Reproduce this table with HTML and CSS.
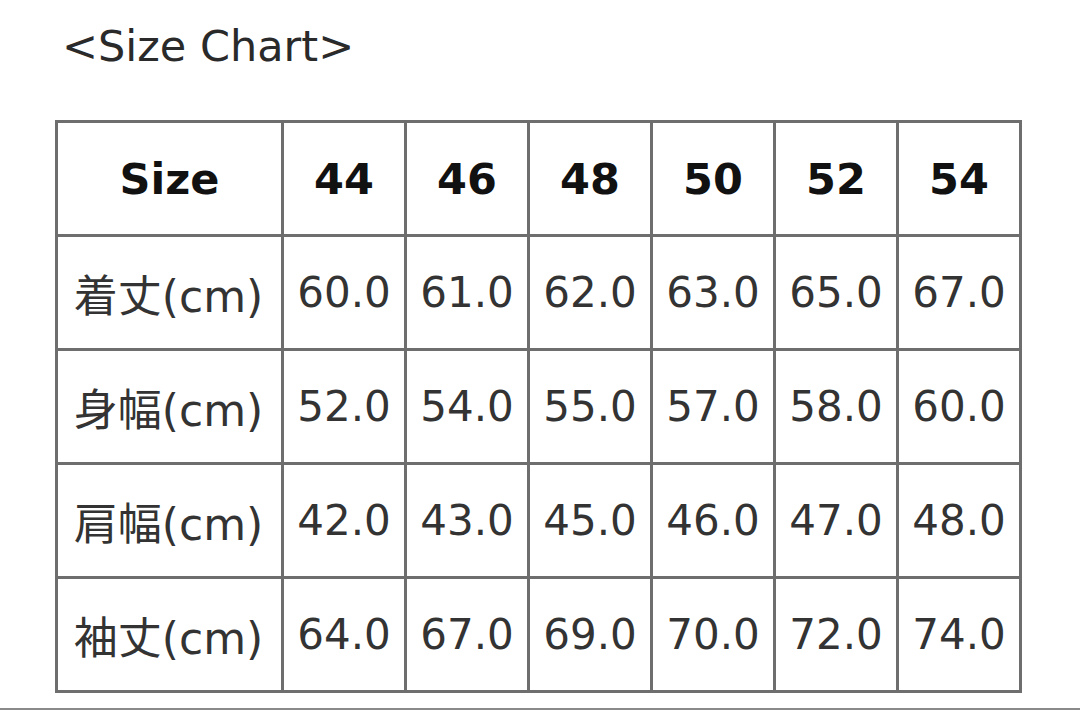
FILE: index.html
```html
<!DOCTYPE html>
<html>
<head>
<meta charset="utf-8">
<link rel="stylesheet" href="styles.css">
</head>
<body>
<div class="page">
  <div class="title">&lt;Size Chart&gt;</div>
  <table class="chart">
    <colgroup>
      <col class="c-label"><col class="c-val"><col class="c-val"><col class="c-val"><col class="c-val"><col class="c-val"><col class="c-val">
    </colgroup>
    <tr class="head">
      <th>Size</th><th>44</th><th>46</th><th>48</th><th>50</th><th>52</th><th>54</th>
    </tr>
    <tr><td class="label">着丈(cm)</td><td>60.0</td><td>61.0</td><td>62.0</td><td>63.0</td><td>65.0</td><td>67.0</td></tr>
    <tr><td class="label">身幅(cm)</td><td>52.0</td><td>54.0</td><td>55.0</td><td>57.0</td><td>58.0</td><td>60.0</td></tr>
    <tr><td class="label">肩幅(cm)</td><td>42.0</td><td>43.0</td><td>45.0</td><td>46.0</td><td>47.0</td><td>48.0</td></tr>
    <tr><td class="label">袖丈(cm)</td><td>64.0</td><td>67.0</td><td>69.0</td><td>70.0</td><td>72.0</td><td>74.0</td></tr>
  </table>
  <div class="footer-line"></div>
</div>
</body>
</html>
```
FILE: styles.css
```css
html, body {
  margin: 0;
  padding: 0;
  background: #ffffff;
}
.page {
  width: 1080px;
  height: 711px;
  overflow: hidden;
  display: flex;
  flex-direction: column;
  font-family: "DejaVu Sans", "Noto Sans CJK JP", sans-serif;
  color: #2e2e2e;
}
.title {
  padding: 18px 0 0 62px;
  height: 60px;
  font-size: 43px;
  line-height: 56px;
  color: #2a2a2a;
}
.chart {
  margin: 42px 0 0 55px;
  border-collapse: collapse;
  table-layout: fixed;
  width: 966px;
}
.c-label { width: 226px; }
.c-val { width: 123px; }
.chart th, .chart td {
  border: 3px solid #6e6e6e;
  height: 111px;
  padding: 0;
  text-align: center;
  vertical-align: middle;
  white-space: nowrap;
  font-size: 42px;
}
.chart th {
  font-weight: bold;
  font-size: 43px;
  color: #111111;
}
.chart td {
  color: #333333;
}
.chart td.label {
  font-size: 44px;
  padding-right: 2px;
}
.footer-line {
  margin-top: 15px;
  height: 2px;
  background: #8a8a8a;
}
```
